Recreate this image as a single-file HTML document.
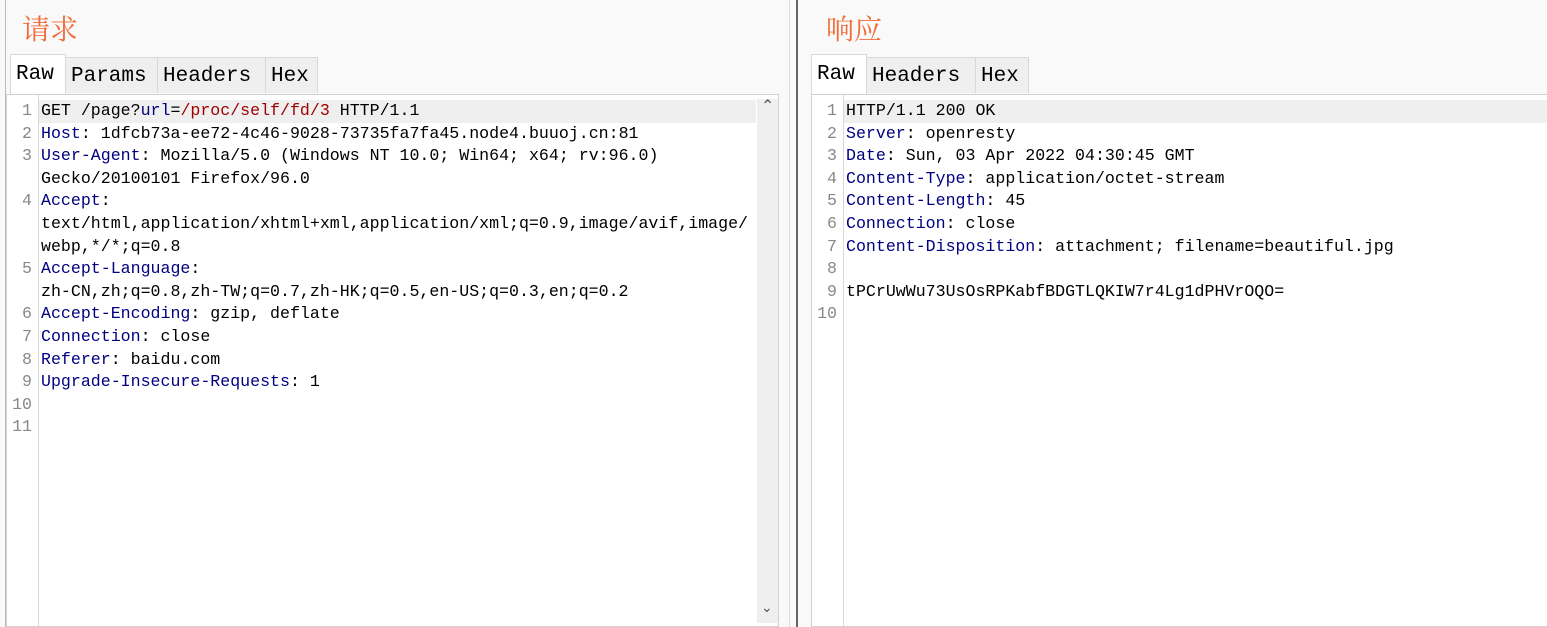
<!DOCTYPE html>
<html><head><meta charset="utf-8"><style>
body{margin:0;width:1547px;height:627px;background:#f9f9f9;position:relative;overflow:hidden;font-family:"Liberation Mono","Noto Sans CJK SC",monospace}
.abs{position:absolute}
.title{font-family:"Liberation Serif","Noto Serif CJK SC",serif;font-size:28px;font-weight:normal;color:#f26b3a;top:8px}
.tab{position:absolute;top:57px;height:36px;background:#efefef;border:1px solid #d8d8d8;border-bottom:none;box-sizing:border-box;font-size:21px;line-height:38px;padding-left:5px;color:#000}
.tab.act{background:#fff;top:54px;height:40px;line-height:40px}
.ed{position:absolute;top:94px;background:#fff;border:1px solid #d0d0d0;box-sizing:border-box}
.gut{position:absolute;top:0;bottom:0;border-right:1px solid #d8d8d8;background:#fff}
.ln{position:absolute;font-size:16.6px;line-height:22.6px;white-space:pre;color:#000}
.num{color:#888;text-align:right}
.k{color:#000080}.r{color:#a00000}
.hl{position:absolute;height:22.6px;background:#efefef}
</style></head><body>
<div class="abs" style="left:5px;top:0;width:1px;height:627px;background:#bbb"></div>
<div class="abs title" style="left:22px">请求</div>
<div class="abs title" style="left:826px">响应</div>
<div class="abs" style="left:796px;top:0;width:2px;height:627px;background:#666"></div>
<div class="abs" style="left:789px;top:0;width:1px;height:627px;background:#ddd"></div>

<div class="tab" style="left:65px;width:93px">Params</div>
<div class="tab" style="left:157px;width:109px">Headers</div>
<div class="tab" style="left:265px;width:53px">Hex</div>
<div class="tab act" style="left:10px;width:56px">Raw</div>

<div class="tab" style="left:866px;width:110px">Headers</div>
<div class="tab" style="left:975px;width:54px">Hex</div>
<div class="tab act" style="left:811px;width:56px">Raw</div>

<div class="ed" style="left:6px;width:773px;height:533px">
 <div class="gut" style="left:0;width:31px"></div>
 <div class="hl" style="left:32px;top:5px;width:717px"></div>
 <div class="abs" style="left:750px;top:4px;width:21px;height:524px;background:#efefef"></div>
 <div class="abs" style="left:754px;top:1px;font-size:16px;color:#555">&#8963;</div>
 <div class="abs" style="left:754px;top:505px;font-size:14px;color:#555">&#8964;</div>
 <div class="ln num" style="left:0;top:5px;width:25px">1
2
3

4


5

6
7
8
9
10
11</div>
 <div class="ln" style="left:34px;top:5px">GET /page?<span class="k">url</span>=<span class="r">/proc/self/fd/3</span> HTTP/1.1
<span class="k">Host</span>: 1dfcb73a-ee72-4c46-9028-73735fa7fa45.node4.buuoj.cn:81
<span class="k">User-Agent</span>: Mozilla/5.0 (Windows NT 10.0; Win64; x64; rv:96.0)
Gecko/20100101 Firefox/96.0
<span class="k">Accept</span>:
text/html,application/xhtml+xml,application/xml;q=0.9,image/avif,image/
webp,*/*;q=0.8
<span class="k">Accept-Language</span>:
zh-CN,zh;q=0.8,zh-TW;q=0.7,zh-HK;q=0.5,en-US;q=0.3,en;q=0.2
<span class="k">Accept-Encoding</span>: gzip, deflate
<span class="k">Connection</span>: close
<span class="k">Referer</span>: baidu.com
<span class="k">Upgrade-Insecure-Requests</span>: 1</div>
</div>

<div class="ed" style="left:811px;width:740px;height:533px">
 <div class="gut" style="left:0;width:31px"></div>
 <div class="hl" style="left:32px;top:5px;width:708px"></div>
 <div class="ln num" style="left:0;top:5px;width:25px">1
2
3
4
5
6
7
8
9
10</div>
 <div class="ln" style="left:34px;top:5px">HTTP/1.1 200 OK
<span class="k">Server</span>: openresty
<span class="k">Date</span>: Sun, 03 Apr 2022 04:30:45 GMT
<span class="k">Content-Type</span>: application/octet-stream
<span class="k">Content-Length</span>: 45
<span class="k">Connection</span>: close
<span class="k">Content-Disposition</span>: attachment; filename=beautiful.jpg

tPCrUwWu73UsOsRPKabfBDGTLQKIW7r4Lg1dPHVrOQO=</div>
</div>
</body></html>
